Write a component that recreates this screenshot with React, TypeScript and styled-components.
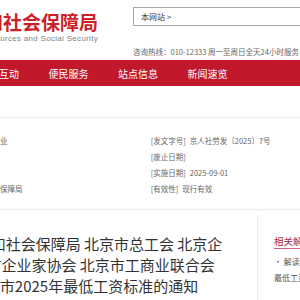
import React from "react";
import styled, { createGlobalStyle } from "styled-components";

const GlobalStyle = createGlobalStyle`
  html, body {
    margin: 0;
    padding: 0;
    background: #fff;
    overflow: hidden;
  }
  body {
    font-family: "Noto Sans CJK SC", "Liberation Sans", sans-serif;
  }
  * { box-sizing: border-box; }
`;

const Page = styled.div`
  width: 480px;
  margin-left: -160px;
`;

const Header = styled.header`
  display: grid;
  grid-template-columns: 282px 1fr;
  height: 60px;
  padding-left: 11px;
`;

const LogoBlock = styled.div`
  display: flex;
  flex-direction: column;
  align-items: flex-end;
  justify-self: start;
  padding-top: 12px;
`;

const LogoTitle = styled.div`
  font-size: 19px;
  line-height: 20px;
  font-weight: 700;
  color: #cc1f2a;
  white-space: nowrap;
`;

const LogoSub = styled.div`
  margin-top: 1.5px;
  font-family: "Liberation Sans", Arial, sans-serif;
  font-size: 8px;
  line-height: 10px;
  letter-spacing: 0.3px;
  color: #808080;
  white-space: nowrap;
`;

const HeaderRight = styled.div`
  padding-top: 7px;
`;

const SearchBox = styled.div`
  display: flex;
  align-items: center;
  width: 220px;
  height: 19px;
  padding-left: 7px;
  border: 1px solid #a8a8a8;
  font-size: 8px;
  color: #333;
  white-space: nowrap;
`;

const Hotline = styled.div`
  margin-top: 21px;
  font-size: 7.5px;
  line-height: 10px;
  color: #666;
  white-space: nowrap;
`;

const Nav = styled.nav`
  display: flex;
  align-items: center;
  gap: 29.5px;
  height: 26px;
  padding-left: 20px;
  background: #c2182c;
`;

const NavItem = styled.a`
  font-size: 10px;
  color: #fff;
  text-decoration: none;
  white-space: nowrap;
`;

const Crumb = styled.div`
  height: 32px;
  border-bottom: 1px solid #ececec;
`;

const InfoSection = styled.section`
  display: grid;
  grid-template-columns: 264.7px 1fr;
  grid-auto-rows: 16px;
  padding: 15px 0 12px 46px;
  border-bottom: 1px solid #ececec;
`;

const InfoItem = styled.div`
  display: flex;
  align-items: center;
  gap: 4px;
  font-size: 7.5px;
  line-height: 16px;
  color: #666;
  white-space: nowrap;
`;

const Lower = styled.div`
  display: flex;
  padding-top: 5px;
`;

const Main = styled.main`
  flex: none;
  width: 392px;
  margin-left: 18px;
  padding-top: 17.5px;
`;

const Title = styled.h1`
  margin: 0;
  font-size: 15px;
  line-height: 21px;
  font-weight: 400;
  color: #333;
  text-align: center;
`;

const TitleLine = styled.span`
  display: block;
  white-space: nowrap;
`;

const Sidebar = styled.aside`
  flex: 1;
  min-height: 100px;
  margin-left: 7px;
  padding: 19px 0 0 16px;
  border-left: 1px solid #ececec;
`;

const SideHeading = styled.div`
  font-size: 9.5px;
  line-height: 14px;
  color: #a52a3f;
  border-bottom: 1px solid #d1607a;
  white-space: nowrap;
`;

const SideItem = styled.div<{ $gap: number }>`
  margin-top: ${(p) => p.$gap}px;
  font-size: 8px;
  line-height: 12px;
  color: #555;
  white-space: nowrap;
`;

const info: [string, string][] = [
  ["[主题分类]", "工资收入分配、劳动就业"],
  ["[发文字号]", "京人社劳发〔2025〕7号"],
  ["[成文日期]", "2025-08-28"],
  ["[废止日期]", ""],
  ["[发布日期]", "2025-08-29"],
  ["[实施日期]", "2025-09-01"],
  ["[发文机构]", "北京市人力资源和社会保障局"],
  ["[有效性]", "现行有效"],
];

const navItems = ["首页", "政务公开", "政民互动", "便民服务", "站点信息", "新闻速览"];

export default function App() {
  return (
    <>
      <GlobalStyle />
      <Page>
        <Header>
          <LogoBlock>
            <LogoTitle>北京市人力资源和社会保障局</LogoTitle>
            <LogoSub>Beijing Municipal Human Resources and Social Security</LogoSub>
          </LogoBlock>
          <HeaderRight>
            <SearchBox>本网站 &gt;</SearchBox>
            <Hotline>咨询热线：010-12333 周一至周日全天24小时服务</Hotline>
          </HeaderRight>
        </Header>
        <Nav>
          {navItems.map((n) => (
            <NavItem key={n}>{n}</NavItem>
          ))}
        </Nav>
        <Crumb />
        <InfoSection>
          {info.map(([k, v]) => (
            <InfoItem key={k}>
              <span>{k}</span>
              {v && <span>{v}</span>}
            </InfoItem>
          ))}
        </InfoSection>
        <Lower>
          <Main>
            <Title>
              <TitleLine>北京市人力资源和社会保障局 北京市总工会 北京企</TitleLine>
              <TitleLine>业联合会 北京市企业家协会 北京市工商业联合会</TitleLine>
              <TitleLine>关于调整北京市2025年最低工资标准的通知</TitleLine>
            </Title>
          </Main>
          <Sidebar>
            <SideHeading>相关解读</SideHeading>
            <SideItem $gap={7}>• 解读：关于调整本市</SideItem>
            <SideItem $gap={4}>最低工资标准的通知</SideItem>
          </Sidebar>
        </Lower>
      </Page>
    </>
  );
}
